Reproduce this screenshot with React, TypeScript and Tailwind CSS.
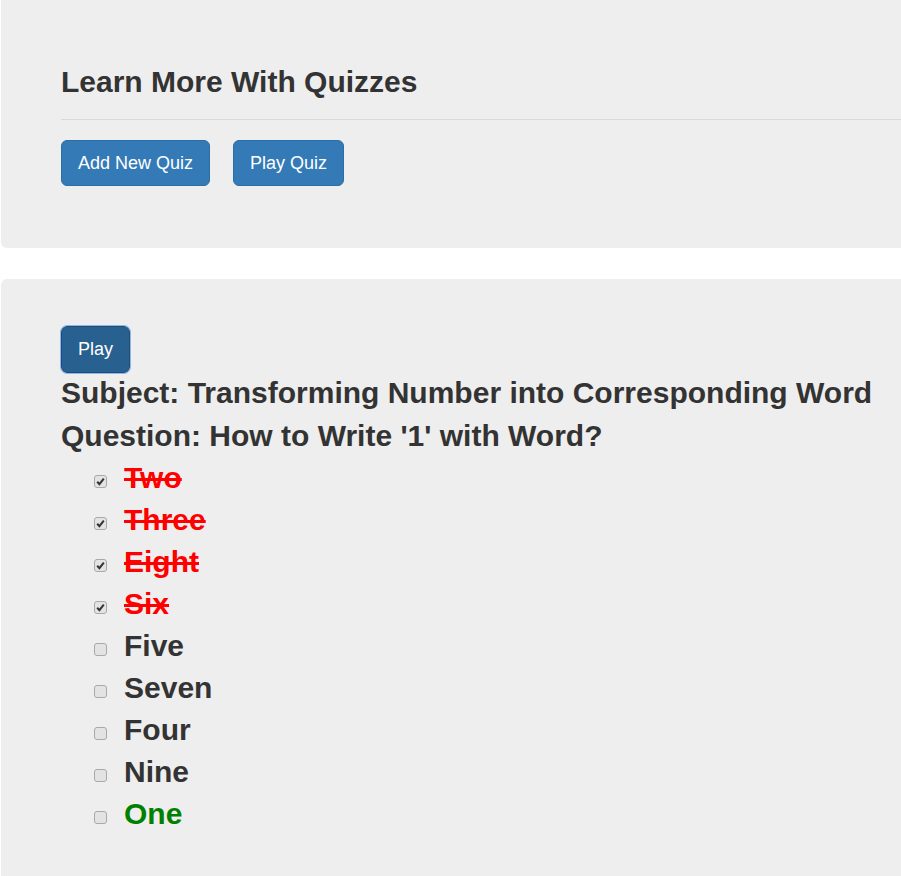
import { useState } from "react";

const options = [
  { label: "Two", checked: true },
  { label: "Three", checked: true },
  { label: "Eight", checked: true },
  { label: "Six", checked: true },
  { label: "Five", checked: false },
  { label: "Seven", checked: false },
  { label: "Four", checked: false },
  { label: "Nine", checked: false },
  { label: "One", checked: false, correct: true },
];

const Option = ({ label, checked, correct }: { label: string; checked: boolean; correct?: boolean }) => {
  const [on, setOn] = useState(checked);

  let tone = "text-[#333]";
  if (on) tone = "text-[#ff0000] line-through decoration-[3px]";
  else if (correct) tone = "text-[#008000]";

  return (
    <label className="flex h-[42px] items-start">
      <span className="relative ml-[33px] mt-[18px] h-[13px] w-[13px]">
        <input
          type="checkbox"
          checked={on}
          onChange={() => setOn(!on)}
          className="block h-[13px] w-[13px] appearance-none rounded-[3px] border border-[#a9a9a9] bg-[#e3e3e3]"
        />
        {/* checkmark overlay */}
        {on && (
          <svg viewBox="0 0 13 13" className="pointer-events-none absolute left-0 top-0 h-[13px] w-[13px]">
            <path d="M3.2 6.8 L5.4 9.2 L9.8 3.6" fill="none" stroke="#333" strokeWidth="2" />
          </svg>
        )}
      </span>
      <span className={`ml-[17px] text-[30px] font-bold leading-[42px] ${tone}`}>{label}</span>
    </label>
  );
};

const App = () => {
  return (
    <div className="min-h-[876px] overflow-hidden bg-white font-['Liberation_Sans',Arial,sans-serif] text-[#333]">
      <div className="ml-px w-[960px]">
        {/* Top jumbotron */}
        <div className="rounded-b-[6px] bg-[#eeeeee] px-[60px] pb-[62px] pt-[65px]">
          <h2 className="border-b border-[#d9d9d9] pb-[21px] text-[30px] font-bold leading-[33px]">
            Learn More With Quizzes
          </h2>
          <div className="mt-[20px] flex gap-[23px]">
            <button className="h-[46px] rounded-[6px] border border-[#2e6da4] bg-[#337ab7] px-[16px] text-[18px] text-white">
              Add New Quiz
            </button>
            <button className="h-[46px] rounded-[6px] border border-[#2e6da4] bg-[#337ab7] px-[16px] text-[18px] text-white">
              Play Quiz
            </button>
          </div>
        </div>

        {/* Quiz jumbotron */}
        <div className="mt-[31px] min-h-[620px] rounded-[6px] bg-[#eeeeee] px-[60px] pt-[47px]">
          <button className="h-[47px] rounded-[6px] border border-[#204d74] bg-[#286090] px-[16px] text-[18px] text-white outline outline-1 outline-[#8fb4ee]">
            Play
          </button>
          <div className="-mt-[2px] text-[30px] font-bold leading-[43px]">
            <div>Subject: Transforming Number into Corresponding Word</div>
            <div>Question: How to Write '1' with Word?</div>
          </div>
          <div className="flex flex-col">
            {options.map((o) => (
              <Option key={o.label} label={o.label} checked={o.checked} correct={o.correct} />
            ))}
          </div>
        </div>
      </div>
    </div>
  );
};

export default App;
